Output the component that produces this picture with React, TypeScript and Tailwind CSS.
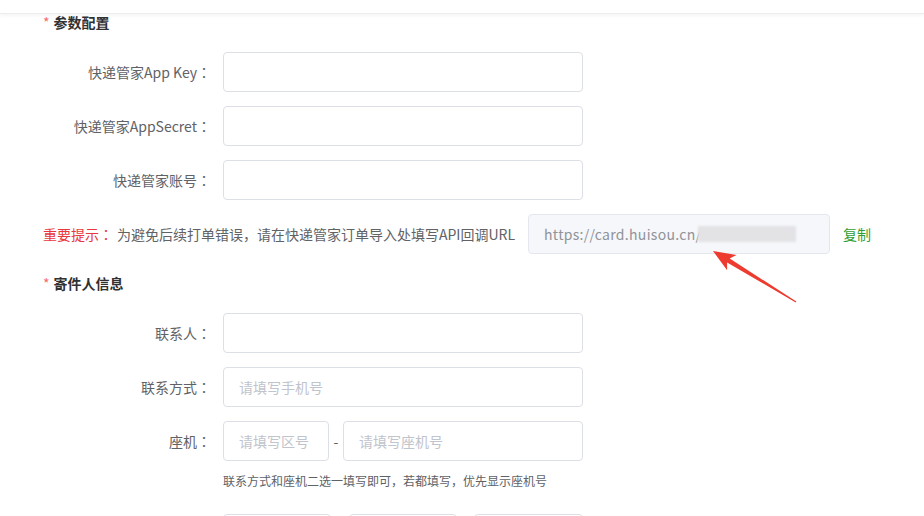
import React from "react";

const Colon = () => <span className="font-['Noto_Sans_CJK_TC',sans-serif]">：</span>;

function Field({ label, children }: { label: string; children: React.ReactNode }) {
  return (
    <div className="flex items-center h-[40px]">
      <label className="w-[180px] pr-3 text-right text-[14px] leading-[20px] text-[#606266] shrink-0">
        {label}
        <Colon />
      </label>
      {children}
    </div>
  );
}

function Input({ placeholder, className = "w-[360px]" }: { placeholder?: string; className?: string }) {
  return (
    <input
      placeholder={placeholder}
      className={`${className} h-[40px] border border-[#dcdfe6] rounded-[4px] px-[15px] text-[14px] text-[#606266] placeholder:text-[#c0c4cc] outline-none bg-white`}
    />
  );
}

function SectionTitle({ title }: { title: string }) {
  return (
    <div className="flex items-center h-[16px] text-[14px] leading-[16px]">
      <span className="text-[#f56c6c] mr-[4px]">*</span>
      <span className="font-bold text-[#303133]">{title}</span>
    </div>
  );
}

export default function App() {
  return (
    <div className="h-[516px] overflow-hidden bg-white font-['Noto_Sans_CJK_SC',sans-serif]">
      {/* 顶部栏 */}
      <div className="h-[14px] bg-white border-b border-[#ececec] shadow-[0_1px_4px_rgba(0,0,0,0.06)]" />

      <div className="relative pl-[43px]">
        <SectionTitle title="参数配置" />

        <div className="mt-[22px] flex flex-col gap-[14px]">
          <Field label="快递管家App Key">
            <Input />
          </Field>
          <Field label="快递管家AppSecret">
            <Input />
          </Field>
          <Field label="快递管家账号">
            <Input />
          </Field>
        </div>

        {/* 重要提示 */}
        <div className="mt-[14px] flex items-center h-[40px] text-[14px] leading-[20px]">
          <span className="text-[#e8383d]">
            重要提示
            <Colon />
          </span>
          <span className="ml-[4px] text-[#606266]">为避免后续打单错误，请在快递管家订单导入处填写API回调URL</span>
          <div className="ml-[13px] w-[302px] h-[40px] flex items-center px-[15px] bg-[#f5f7fa] border border-[#e4e7ed] rounded-[4px] text-[#909399]">
            <span className="tracking-[0.3px]">https://card.huisou.cn/</span>
            <span className="inline-block -ml-[3px] w-[98px] h-[16px] bg-[#e3e3e6] blur-[1px]" />
          </div>
          <span className="ml-[13px] text-[#2f9e35]">复制</span>
        </div>

        <div className="mt-[21px]">
          <SectionTitle title="寄件人信息" />
        </div>

        <div className="mt-[22px] flex flex-col gap-[14px]">
          <Field label="联系人">
            <Input />
          </Field>
          <Field label="联系方式">
            <Input placeholder="请填写手机号" />
          </Field>
          <Field label="座机">
            <div className="flex items-center">
              <Input placeholder="请填写区号" className="w-[106px]" />
              <span className="w-[14px] text-center text-[14px] text-[#606266]">-</span>
              <Input placeholder="请填写座机号" className="w-[240px]" />
            </div>
          </Field>
        </div>

        <div className="mt-[12px] pl-[180px] text-[12px] leading-[16px] text-[#606266]">
          联系方式和座机二选一填写即可，若都填写，优先显示座机号
        </div>

        <div className="mt-[25px] pl-[180px] flex">
          <div className="w-[108px] h-[40px] border border-[#dcdfe6] rounded-[4px]" />
          <div className="ml-[18px] w-[108px] h-[40px] border border-[#dcdfe6] rounded-[4px]" />
          <div className="ml-[17px] w-[109px] h-[40px] border border-[#dcdfe6] rounded-[4px]" />
        </div>

        {/* 红色箭头标注 */}
        <svg
          className="absolute left-[700px] top-[231px]"
          width="105"
          height="62"
          viewBox="0 0 105 62"
        >
          <polygon
            points="13,6 36.5,9.9 29.7,13.4 96.3,56.6 95.7,57.4 27.1,17.6 27.1,25.3"
            fill="#ee3b2f"
          />
        </svg>
      </div>
    </div>
  );
}
